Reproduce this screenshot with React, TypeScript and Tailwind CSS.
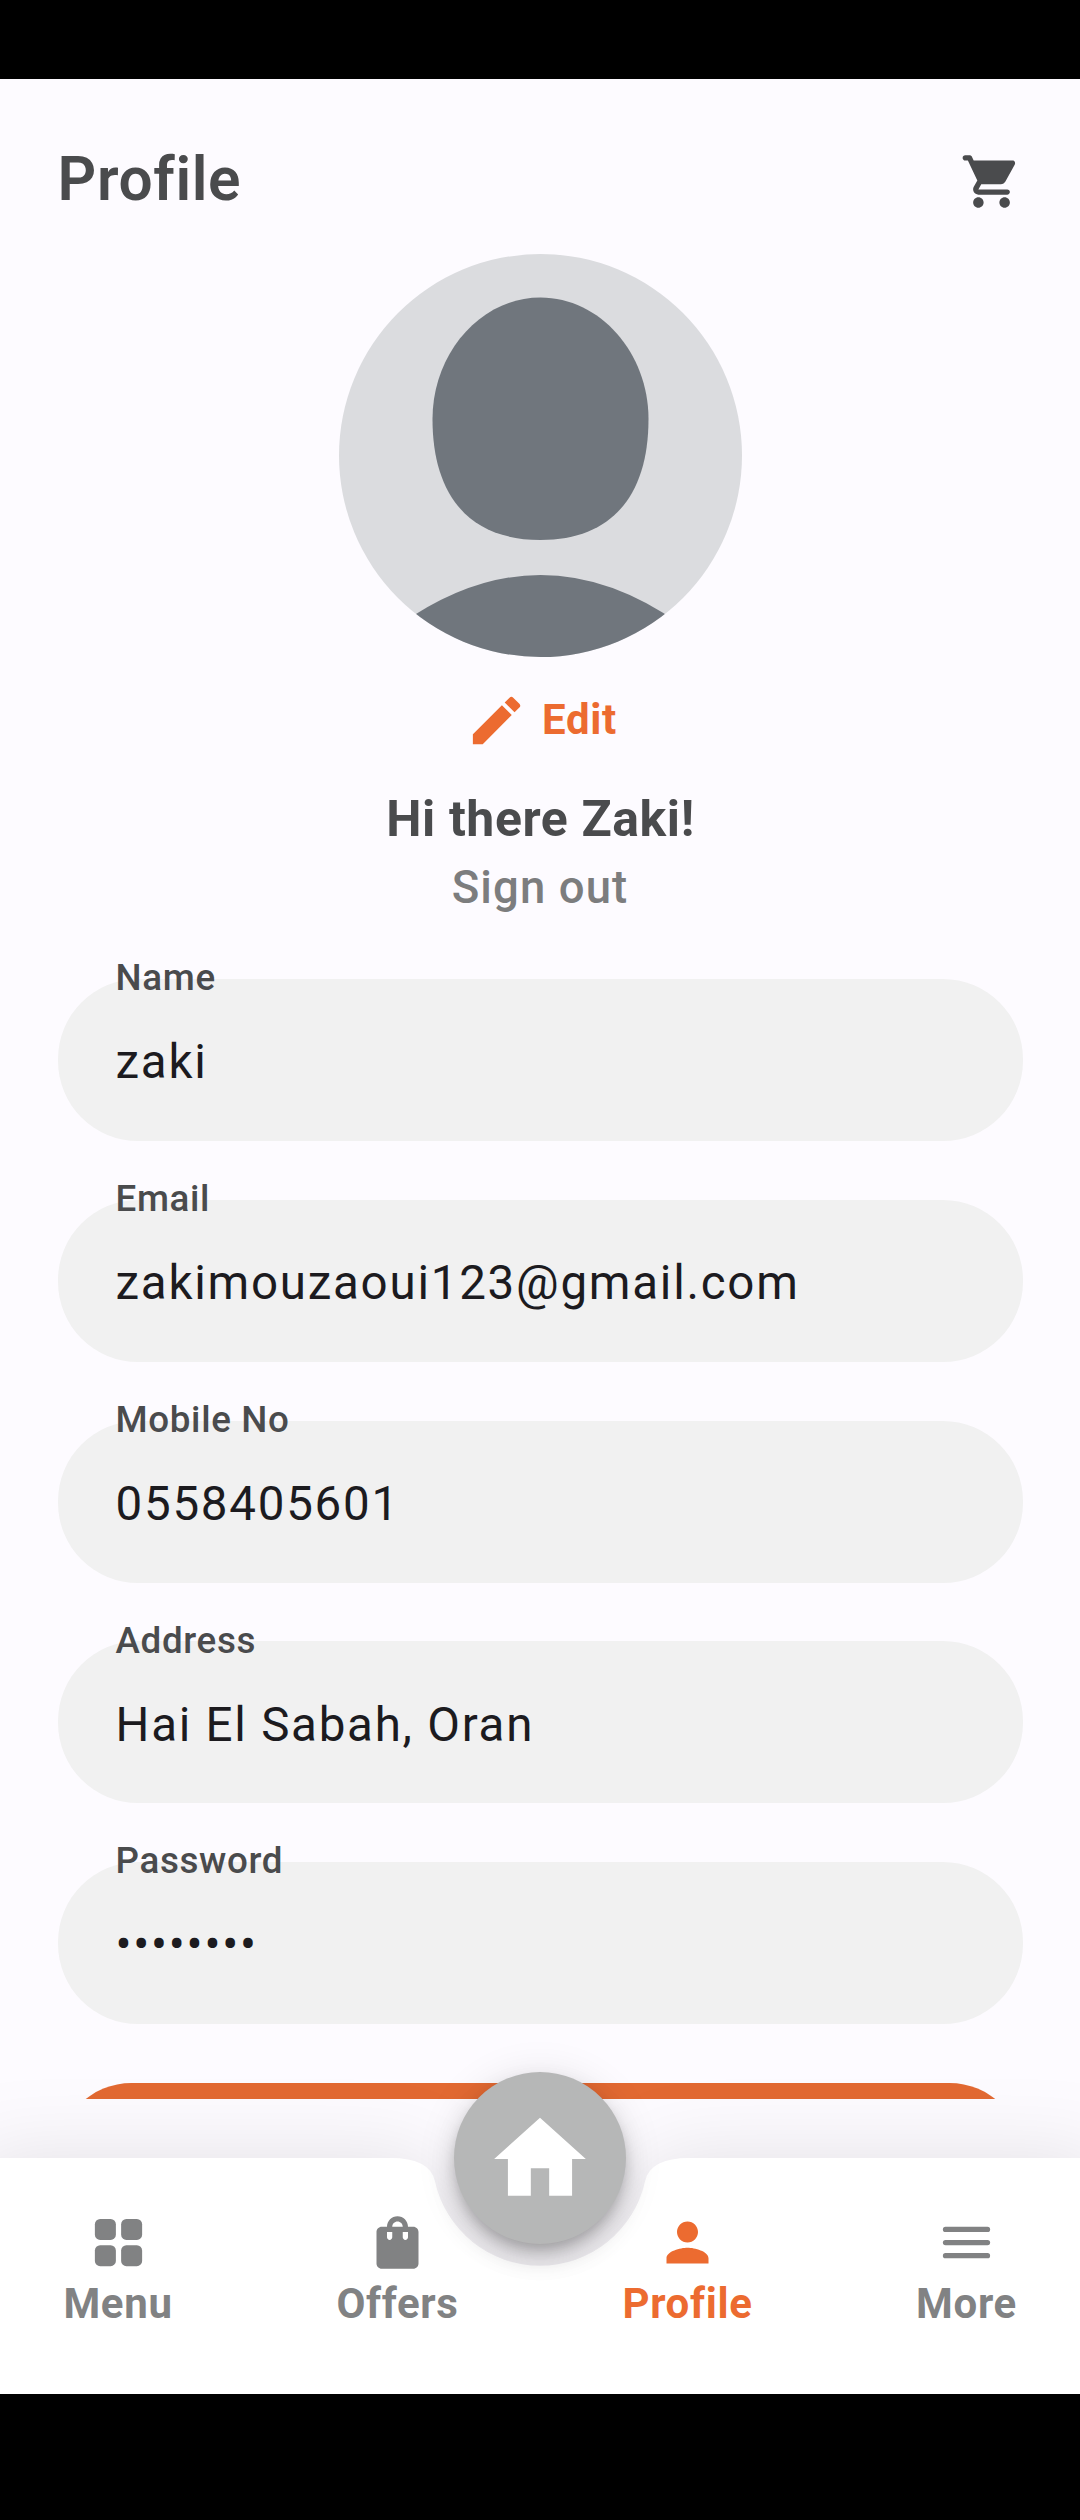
import type { ReactNode } from "react";
import { MdEdit, MdHome, MdPerson, MdShoppingBag } from "react-icons/md";

const fields = [
  { label: "Name", value: "zaki" },
  { label: "Email", value: "zakimouzaoui123@gmail.com" },
  { label: "Mobile No", value: "0558405601" },
  { label: "Address", value: "Hai El Sabah, Oran" },
  { label: "Password", value: "••••••••" },
];

function CartIcon() {
  return (
    <svg viewBox="0 0 24 24" className="size-[63px]" fill="currentColor">
      <path d="M7 18c-1.1 0-1.99.9-1.99 2S5.9 22 7 22s2-.9 2-2-.9-2-2-2zM1 3c0 .55.45 1 1 1h1l3.6 7.59-1.35 2.44C4.52 15.37 5.48 17 7 17h11c.55 0 1-.45 1-1s-.45-1-1-1H7l1.1-2h7.45c.75 0 1.41-.41 1.75-1.03l3.58-6.49c.37-.66-.11-1.48-.87-1.48H5.21l-.67-1.43c-.16-.35-.52-.57-.9-.57H2c-.55 0-1 .45-1 1zm16 15c-1.1 0-1.99.9-1.99 2s.89 2 1.99 2 2-.9 2-2-.9-2-2-2z" />
    </svg>
  );
}

function GridIcon() {
  return (
    <svg viewBox="0 0 24 24" className="size-[63px]" fill="currentColor">
      <rect x="3" y="3" width="8" height="8" rx="2" />
      <rect x="13" y="3" width="8" height="8" rx="2" />
      <rect x="3" y="13" width="8" height="8" rx="2" />
      <rect x="13" y="13" width="8" height="8" rx="2" />
    </svg>
  );
}

function MenuIcon() {
  return (
    <svg viewBox="0 0 24 24" className="size-[63px]" fill="currentColor">
      <rect x="3" y="6" width="18" height="2" rx="1" />
      <rect x="3" y="11" width="18" height="2" rx="1" />
      <rect x="3" y="16" width="18" height="2" rx="1" />
    </svg>
  );
}

function Avatar() {
  return (
    <div className="mt-[40.5px] size-[403px] shrink-0 self-center overflow-hidden rounded-full bg-[#dbdcdf]">
      <svg viewBox="0 0 403 403" className="size-full" fill="#70767d">
        <path d="M201.5 43.5C261 43.5 309.5 99 309.5 165C309.5 240 274 286 201.5 286C129 286 93.5 240 93.5 165C93.5 99 142 43.5 201.5 43.5Z" />
        <path d="M60.5 371Q201.5 271 342.5 371V403H60.5Z" />
      </svg>
    </div>
  );
}

function Field({ label, value }: { label: string; value: string }) {
  return (
    <div className="relative flex h-[162px] shrink-0 items-center rounded-[80px] bg-[#f1f1f1] px-[58px] pt-[4.5px]">
      <span className="absolute top-[-21.7px] left-[58px] text-[36.75px] leading-[42px] font-medium tracking-[0.66px] text-[#4a4b4d]">
        {label}
      </span>
      <span className="text-[47.5px] leading-[56px] tracking-[1.75px] text-[#1c1b1f]">{value}</span>
    </div>
  );
}

function NavItem({ icon, label, active }: { icon: ReactNode; label: string; active?: boolean }) {
  return (
    <div
      className={
        active
          ? "flex w-[160px] flex-col items-center text-[#ec6b30]"
          : "flex w-[160px] flex-col items-center text-[#818283]"
      }
    >
      {icon}
      <span className="mt-[5px] text-[42px] leading-[50px] font-bold tracking-[0.66px]">{label}</span>
    </div>
  );
}

export default function App() {
  return (
    <div className="flex h-[2520px] w-[1080px] flex-col bg-black font-['Roboto',sans-serif]">
      <div className="mt-[79px] flex h-[2315px] flex-col overflow-hidden bg-[#fdfbff]">
        <main className="flex h-[2020px] shrink-0 flex-col overflow-hidden px-[57.5px] pt-[71px]">
          <header className="flex h-[63px] shrink-0 items-start justify-between text-[#4a4b4d]">
            <h1 className="text-[60.4px] leading-[60px] font-semibold tracking-[0.66px]">Profile</h1>
            <CartIcon />
          </header>
          <Avatar />
          <div className="mt-[32px] flex h-[63px] shrink-0 items-center justify-center gap-[14.5px] pl-[1.5px] text-[#ec6b30]">
            <MdEdit className="size-[63px]" />
            <span className="pb-[1px] text-[42px] leading-[50px] font-bold tracking-[0.66px]">Edit</span>
          </div>
          <p className="mt-[32px] shrink-0 pl-[1px] text-center text-[49.9px] leading-[70px] font-bold tracking-[0.6px] text-[#4a4b4d]">
            Hi there Zaki!
          </p>
          <p className="mt-[-1px] shrink-0 text-center text-[45.5px] leading-[70px] font-medium tracking-[1.1px] text-[#7c7d7e]">
            Sign out
          </p>
          <form className="mt-[56.5px] flex shrink-0 flex-col gap-[58.75px]">
            {fields.map((f) => (
              <Field key={f.label} label={f.label} value={f.value} />
            ))}
            <div className="h-[147px] rounded-full bg-[#e26932]" />
          </form>
        </main>
        <nav className="relative mt-[59px] h-[236px] shrink-0">
          <svg
            viewBox="0 0 1080 236"
            className="absolute inset-0 h-[236px] w-[1080px] overflow-visible drop-shadow-[0_2px_42px_rgba(0,0,0,0.11)]"
            fill="#ffffff"
          >
            <path d="M-24 0H390.4Q429.8 0 434.9 23.2A107.6 107.6 0 0 0 645.1 23.2Q650.2 0 689.6 0H1104V236H-24Z" />
          </svg>
          <div className="absolute top-[-86px] left-[454px] flex size-[172px] items-center justify-center rounded-full bg-[#b6b7b7] pt-[2px] text-white shadow-[0_8px_13px_-3px_rgba(0,0,0,0.2),0_14px_26px_rgba(0,0,0,0.14),0_3px_40px_rgba(0,0,0,0.1)]">
            <MdHome className="size-[110px]" />
          </div>
          <div className="relative flex pt-[53px] pl-[38px]">
            <NavItem icon={<GridIcon />} label="Menu" />
            <div className="w-[119.5px]" />
            <NavItem icon={<MdShoppingBag className="size-[63px]" />} label="Offers" />
            <div className="w-[130px]" />
            <NavItem icon={<MdPerson className="size-[63px]" />} label="Profile" active />
            <div className="w-[119px]" />
            <NavItem icon={<MenuIcon />} label="More" />
          </div>
        </nav>
      </div>
    </div>
  );
}
